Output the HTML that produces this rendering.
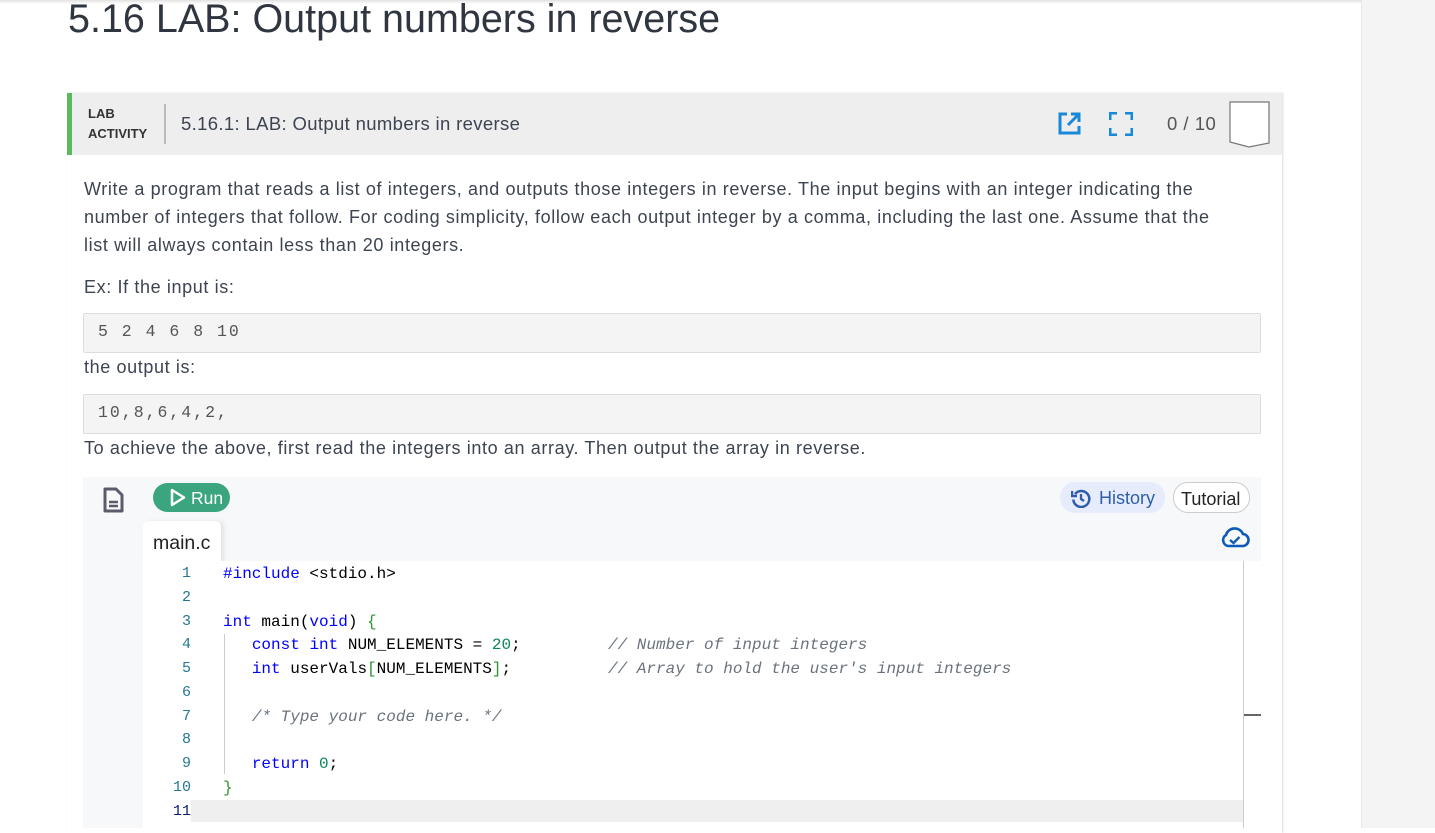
<!DOCTYPE html>
<html><head><meta charset="utf-8"><style>
*{margin:0;padding:0;box-sizing:border-box}
body{width:1435px;height:828px;overflow:hidden;background:#fff;font-family:"Liberation Sans",sans-serif;color:#3d4451;position:relative}
.a{position:absolute;white-space:nowrap}
.right{position:absolute;left:1361px;top:0;width:74px;height:828px;background:#f4f4f4;border-left:1px solid #e6e6e6}
.topsh{position:absolute;left:0;top:0;width:1361px;height:4px;background:linear-gradient(#e2e2e2,#fff)}
.card{position:absolute;left:67px;top:93px;width:1215px;height:740px;background:#fff;box-shadow:1px 0 2px #ddd}
.hdr{position:absolute;left:67px;top:93px;width:1215px;height:62px;background:#eeeeee;border-left:5px solid #5cb85c}
p.t{position:absolute;left:84px;font-size:18px;letter-spacing:0.62px;line-height:28px;color:#3d4451;white-space:nowrap}
.pre{position:absolute;left:83px;width:1178px;height:40px;background:#f4f4f4;border:1px solid #ddd;border-radius:2px;font-family:"Liberation Mono",monospace;font-size:16.5px;letter-spacing:2px;color:#555;padding:8px 14px}
.ed{position:absolute;left:83px;top:477px;width:1178px;height:351px;background:#f7f8fa}
.code{position:absolute;left:143px;top:561px;width:1118px;height:267px;background:#fff}
.ln{position:absolute;left:143px;width:48px;text-align:right;font-family:"Liberation Mono",monospace;font-size:15px;color:#237893}
.c{position:absolute;left:223px;font-family:"Liberation Mono",monospace;font-size:16px;color:#000;white-space:pre}
.kw{color:#0000ff}.n{color:#098658}.cm{color:#6a737d;font-style:italic}.br{color:#319331}
</style></head><body>
<div class="topsh"></div>
<div class="right"></div>
<div class="a" style="left:68px;top:-3px;font-size:39.5px;color:#2f3640">5.16 LAB: Output numbers in reverse</div>
<div class="card"></div>
<div class="hdr"></div>
<div class="a" style="left:88px;top:104px;font-size:13px;font-weight:bold;line-height:20px;color:#333">LAB<br>ACTIVITY</div>
<div class="a" style="left:164px;top:104px;width:2px;height:40px;background:#bbb"></div>
<div class="a" style="left:181px;top:113px;font-size:18.5px;letter-spacing:0.35px;color:#3d4451">5.16.1: LAB: Output numbers in reverse</div>
<svg class="a" style="left:1057px;top:112px" width="24" height="24" viewBox="0 0 24 24"><path d="M10 2H3v19h19v-7" fill="none" stroke="#1a88d8" stroke-width="3"/><path d="M11 13L21 3M14 2h8v8" fill="none" stroke="#1a88d8" stroke-width="3"/></svg>
<svg class="a" style="left:1109px;top:112px" width="24" height="24" viewBox="0 0 24 24"><path d="M1 8V1h7M16 1h7v7M23 16v7h-7M8 23H1v-7" fill="none" stroke="#1a88d8" stroke-width="3"/></svg>
<div class="a" style="left:1167px;top:113px;font-size:18.5px;letter-spacing:0.5px;color:#555">0 / 10</div>
<svg class="a" style="left:1229px;top:101px" width="42" height="47" viewBox="0 0 42 47"><path d="M1 1H40V42L20 46L1 41Z" fill="#fff" stroke="#777" stroke-width="1.2"/></svg>

<p class="t" style="top:175px">Write a program that reads a list of integers, and outputs those integers in reverse. The input begins with an integer indicating the<br>number of integers that follow. For coding simplicity, follow each output integer by a comma, including the last one. Assume that the<br>list will always contain less than 20 integers.</p>
<p class="t" style="top:273px">Ex: If the input is:</p>
<div class="pre" style="top:313px">5 2 4 6 8 10</div>
<p class="t" style="top:353px">the output is:</p>
<div class="pre" style="top:394px">10,8,6,4,2,</div>
<p class="t" style="top:434px">To achieve the above, first read the integers into an array. Then output the array in reverse.</p>

<div class="ed"></div>
<svg class="a" style="left:103px;top:487px" width="21" height="26" viewBox="0 0 21 26"><path d="M2 2h11l6 6v16H2z" fill="none" stroke="#5b5b6b" stroke-width="3" stroke-linejoin="round"/><path d="M6 15h9M6 19h9" stroke="#5b5b6b" stroke-width="2.5"/></svg>
<div class="a" style="left:153px;top:483px;width:77px;height:29px;border-radius:15px;background:#3aa57f;color:#fff;font-size:17.5px;padding:5px 0 0 38px">Run</div>
<svg class="a" style="left:170px;top:488px" width="16" height="19" viewBox="0 0 16 19"><path d="M2 2L14 9.5L2 17Z" fill="none" stroke="#fff" stroke-width="2.5" stroke-linejoin="round"/></svg>
<div class="a" style="left:1060px;top:482px;width:105px;height:31px;border-radius:15px;background:#e6ecfb;color:#2f5faa;font-size:18px;padding:6px 0 0 39px">History</div>
<svg class="a" style="left:1071px;top:488px" width="20" height="20" viewBox="0 0 20 20"><path d="M4 6A8 8 0 1 1 2.3 11.5" fill="none" stroke="#2f5faa" stroke-width="2.5"/><path d="M1 3v5h5" fill="none" stroke="#2f5faa" stroke-width="2.5"/><path d="M10 6v5l3 2" fill="none" stroke="#2f5faa" stroke-width="2.3"/></svg>
<div class="a" style="left:1173px;top:482px;width:77px;height:31px;border-radius:15px;background:#fff;border:1px solid #ccc;color:#222;font-size:18px;padding:6px 0 0 7px">Tutorial</div>
<svg class="a" style="left:1220px;top:525px" width="30" height="24" viewBox="0 0 30 24"><path d="M8 21H22A6 6 0 0 0 23 9A9 9 0 0 0 6 10A6 6 0 0 0 8 21Z" fill="none" stroke="#0d5bb5" stroke-width="2.6"/><path d="M10 15l3.5 3 6-6" fill="none" stroke="#0d5bb5" stroke-width="2.3"/></svg>
<div class="a" style="left:143px;top:521px;width:78px;height:42px;background:#fff;border-radius:6px 6px 0 0;box-shadow:3px 0 4px #e4e4e4"></div>
<div class="a" style="left:153px;top:532px;font-size:19.5px;color:#222">main.c</div>

<div class="code"></div>
<div class="a" style="left:1243px;top:561px;width:1px;height:267px;background:#ccc"></div>
<div class="a" style="left:1244px;top:714px;width:17px;height:2px;background:#666"></div>
<div class="a" style="left:191px;top:800px;width:1052px;height:22px;background:#efefef"></div>
<div class="a" style="left:224px;top:634px;width:1px;height:140px;background:#ccc"></div>

<div class="ln" style="top:565px">1</div><div class="ln" style="top:589px">2</div><div class="ln" style="top:613px">3</div><div class="ln" style="top:636px">4</div><div class="ln" style="top:660px">5</div><div class="ln" style="top:684px">6</div><div class="ln" style="top:708px">7</div><div class="ln" style="top:731px">8</div><div class="ln" style="top:755px">9</div><div class="ln" style="top:779px">10</div><div class="ln" style="top:803px;color:#0b216f">11</div>

<div class="c" style="top:565px"><span class="kw">#include</span> &lt;stdio.h&gt;</div>
<div class="c" style="top:613px"><span class="kw">int</span> main(<span class="kw">void</span>) <span class="br">{</span></div>
<div class="c" style="top:636px">   <span class="kw">const</span> <span class="kw">int</span> NUM_ELEMENTS = <span class="n">20</span>;</div>
<div class="c" style="top:636px;left:608px"><span class="cm">// Number of input integers</span></div>
<div class="c" style="top:660px">   <span class="kw">int</span> userVals<span class="br">[</span>NUM_ELEMENTS<span class="br">]</span>;</div>
<div class="c" style="top:660px;left:608px"><span class="cm">// Array to hold the user's input integers</span></div>
<div class="c" style="top:708px">   <span class="cm">/* Type your code here. */</span></div>
<div class="c" style="top:755px">   <span class="kw">return</span> <span class="n">0</span>;</div>
<div class="c" style="top:779px"><span class="br">}</span></div>
</body></html>
